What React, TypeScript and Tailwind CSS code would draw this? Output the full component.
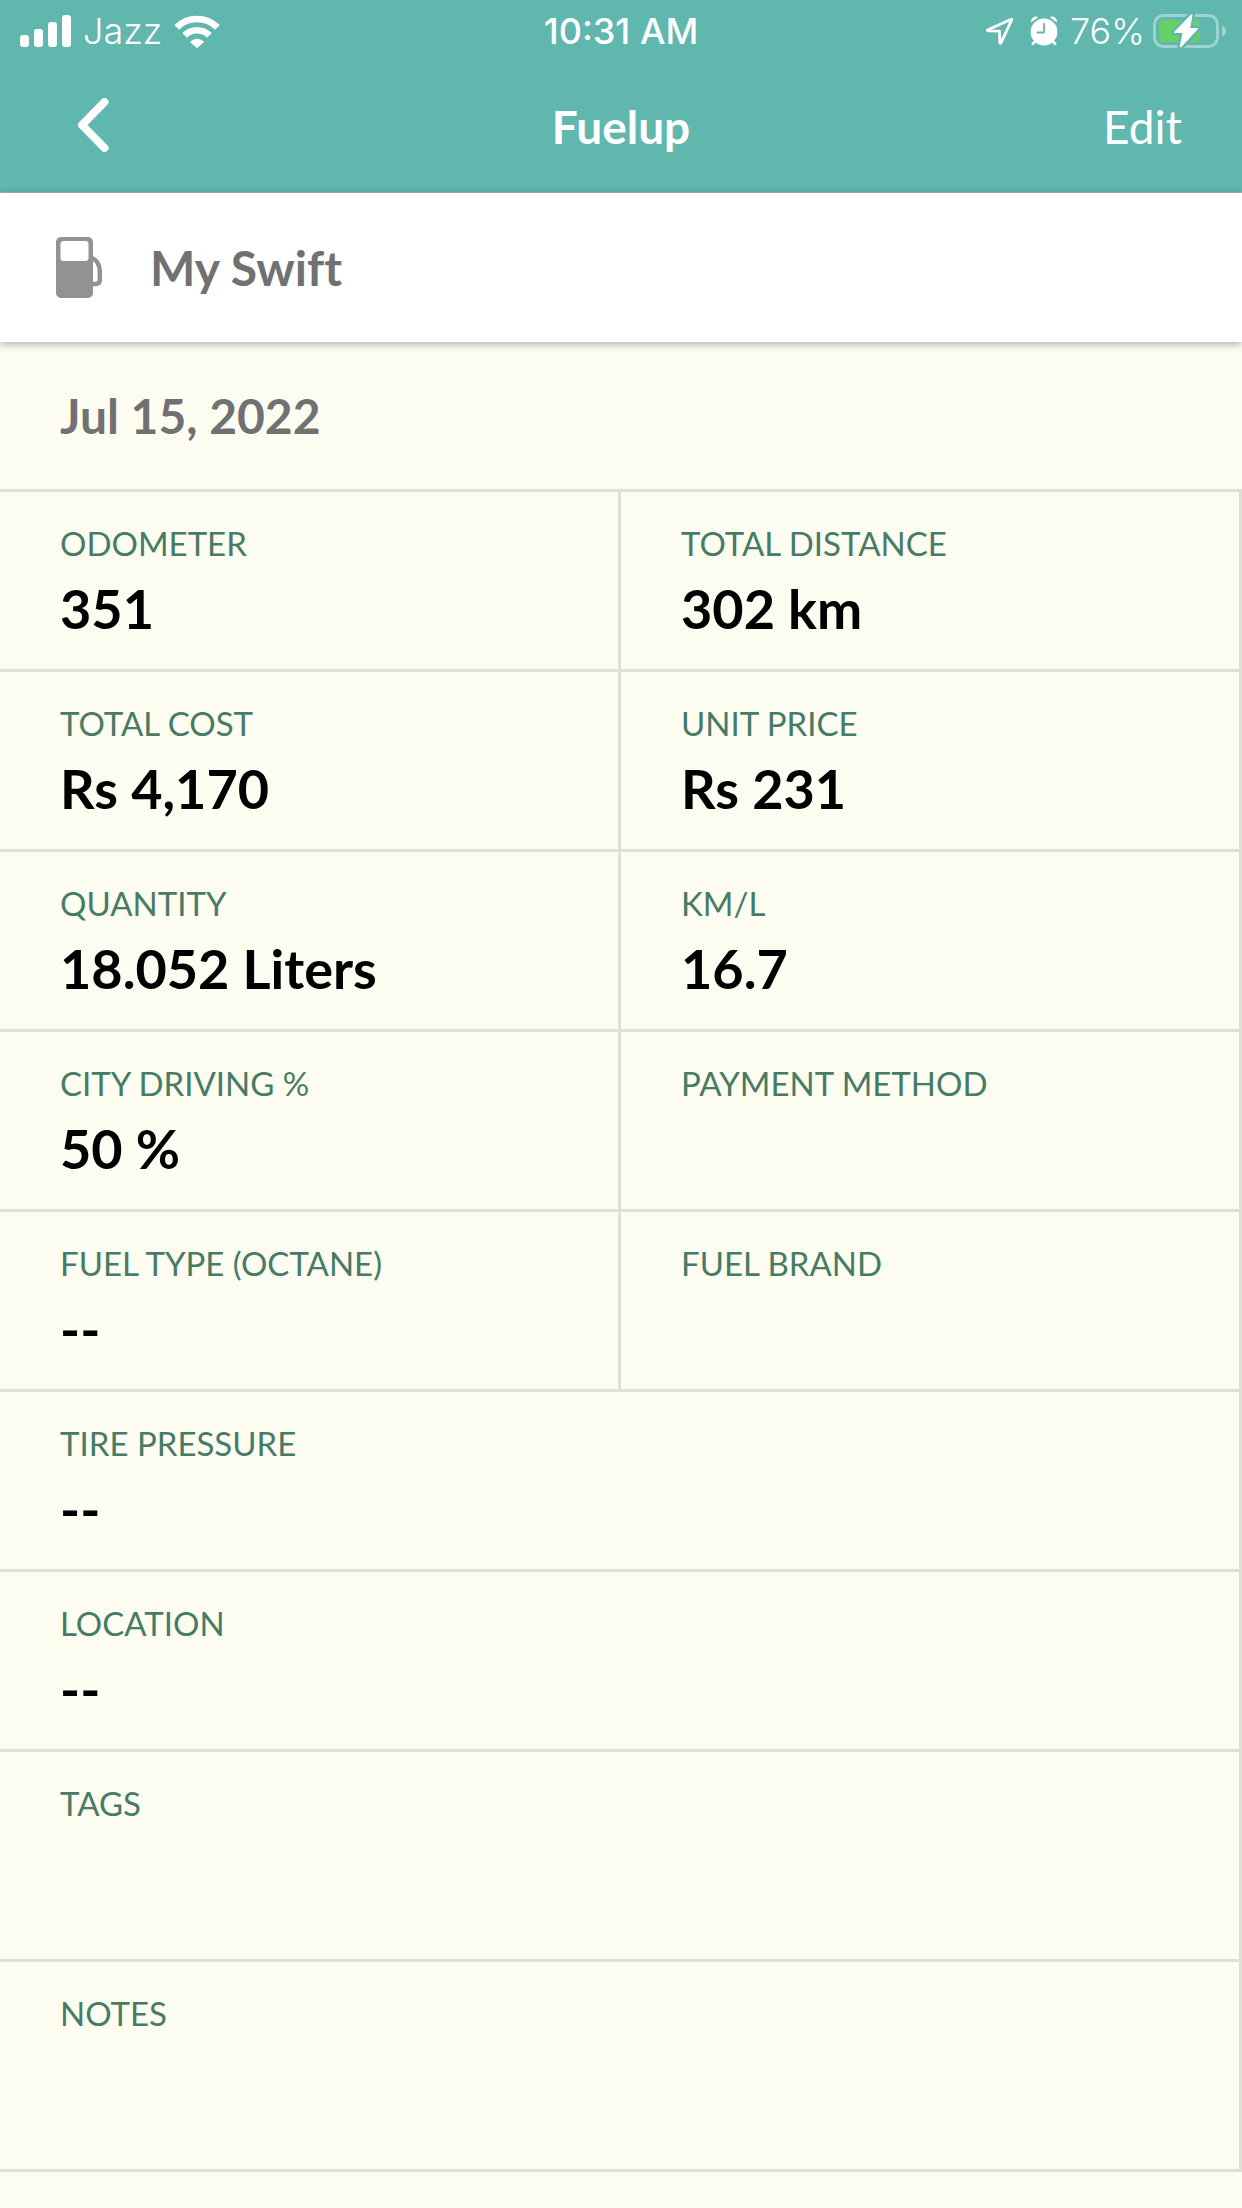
import React from "react";

type Field = { label: string; value?: string; wide?: boolean; tall?: boolean };

const fields: Field[] = [
  { label: "ODOMETER", value: "351" },
  { label: "TOTAL DISTANCE", value: "302 km" },
  { label: "TOTAL COST", value: "Rs 4,170" },
  { label: "UNIT PRICE", value: "Rs 231" },
  { label: "QUANTITY", value: "18.052 Liters" },
  { label: "KM/L", value: "16.7" },
  { label: "CITY DRIVING %", value: "50 %" },
  { label: "PAYMENT METHOD" },
  { label: "FUEL TYPE (OCTANE)", value: "--" },
  { label: "FUEL BRAND" },
  { label: "TIRE PRESSURE", value: "--", wide: true },
  { label: "LOCATION", value: "--", wide: true },
  { label: "TAGS", wide: true, tall: true },
  { label: "NOTES", wide: true, tall: true },
];

function SignalIcon() {
  return (
    <svg width="51" height="32" viewBox="0 0 51 32" fill="currentColor" aria-hidden="true">
      <rect x="0" y="20" width="9" height="12" rx="3" />
      <rect x="14" y="14" width="9" height="18" rx="3" />
      <rect x="28" y="7" width="9" height="25" rx="3" />
      <rect x="42" y="0" width="9" height="32" rx="3" />
    </svg>
  );
}

function WifiIcon() {
  return (
    <svg width="46" height="33" viewBox="0 0 46 33" aria-hidden="true">
      <g fill="none" stroke="currentColor" strokeWidth="6.6">
        <path d="M2.6 12.4a29 29 0 0 1 40.8 0" />
        <path d="M10.6 20.4a17.6 17.6 0 0 1 24.8 0" />
      </g>
      <path
        d="M16.6 26.2a9.4 9.4 0 0 1 12.8 0q.6.6 0 1.2l-5.6 5.2q-.8.7-1.6 0l-5.6-5.2q-.6-.6 0-1.2z"
        fill="currentColor"
      />
    </svg>
  );
}

function LocationIcon() {
  return (
    <svg width="28" height="28" viewBox="0 0 28 28" fill="none" aria-hidden="true">
      <path
        d="M25.3 2.2 2 12.7q-1.2.8.2 1.2l11.3.3.3 11.3q.4 1.4 1.3.2L25.8 2.7q.2-.8-.5-.5z"
        stroke="currentColor"
        strokeWidth="2.8"
        strokeLinejoin="round"
      />
    </svg>
  );
}

function AlarmIcon() {
  return (
    <svg width="28" height="30" viewBox="0 0 28 30" aria-hidden="true">
      <circle cx="14" cy="16" r="13.4" fill="currentColor" />
      <path
        d="M5 25.5 2.8 27.8M23 25.5l2.2 2.3"
        stroke="currentColor"
        strokeWidth="2.6"
        strokeLinecap="round"
      />
      <path
        d="M1.6 5.6C1 2.6 4.2 0 7.4 1.4zM26.4 5.6C27 2.6 23.8 0 20.6 1.4z"
        fill="currentColor"
        stroke="currentColor"
        strokeLinejoin="round"
      />
      <path
        d="M14 8v8.5H7.5"
        fill="none"
        stroke="#5fb7ae"
        strokeWidth="1.8"
        strokeLinecap="round"
        strokeLinejoin="round"
      />
    </svg>
  );
}

const bolt =
  "M38 .5 21.5 17.5q-.8 1.5.6 1.5h7.4L26.8 32q0 2 1.6 1L44.6 15.5q.8-1.5-.6-1.5h-6.8L39.4 1.5q.1-1.6-1.4-1z";

function BatteryIcon() {
  return (
    <svg width="73" height="34" viewBox="0 0 73 34" role="img" aria-label="Battery charging">
      <rect x="1.5" y="1.5" width="63" height="31" rx="9" fill="none" stroke="#9fd4ce" strokeWidth="3" />
      <path d="M69 11q4 2.5 4 6t-4 6z" fill="#9fd4ce" />
      <rect x="6" y="6" width="41" height="22" rx="4.5" fill="#66d067" />
      <path d={bolt} fill="#fff" stroke="#5fb7ae" strokeWidth="5" strokeLinejoin="round" />
      <path d={bolt} fill="#fff" />
    </svg>
  );
}

function BackIcon() {
  return (
    <svg width="34" height="58" viewBox="0 0 34 58" fill="none" aria-hidden="true">
      <path
        d="M28.5 4 6 27 28.5 50"
        stroke="currentColor"
        strokeWidth="8"
        strokeLinecap="round"
        strokeLinejoin="round"
      />
    </svg>
  );
}

function PumpIcon() {
  return (
    <svg width="46" height="61" viewBox="0 0 46 61" aria-hidden="true">
      <path
        fillRule="evenodd"
        fill="#929292"
        d="M5 0h27a5 5 0 0 1 5 5v51a5 5 0 0 1-5 5H5a5 5 0 0 1-5-5V5a5 5 0 0 1 5-5zM7.5 4Q4.5 4 4.5 7v14q0 3 3 3h22q3 0 3-3V7q0-3-3-3z"
      />
      <path d="M36 21c5 2 7.8 7 7.8 14v8q0 4-4 4H36" fill="none" stroke="#929292" strokeWidth="4.5" />
    </svg>
  );
}

function FieldCell({ label, value, wide, tall }: Field) {
  return (
    <div
      className={`border-t-3 border-r-3 border-[#dfdfd8] pl-15 pt-[30px] ${wide ? "col-span-2" : ""} ${
        tall ? "min-h-[210px]" : "min-h-[180px]"
      }`}
    >
      <dt className="text-[33px] leading-[42px] text-[#487b65]">{label}</dt>
      <dd className="mt-3 text-[54px] leading-[66px] font-bold text-black">{value}</dd>
    </div>
  );
}

export default function App() {
  return (
    <div className="min-h-screen bg-[#fcfdf0] font-['Lato',sans-serif]">
      <header className="border-b border-[#b0b0b0] bg-[#5fb7ae] text-white">
        <div className="grid h-[62px] grid-cols-[1fr_auto_1fr] items-center px-5 font-['Inter',sans-serif] text-[36px] leading-[42px]">
          <div className="flex items-center gap-3">
            <SignalIcon />
            <span className="font-light">Jazz</span>
            <WifiIcon />
          </div>
          <span className="font-medium">10:31 AM</span>
          <div className="-mr-1 flex items-center justify-end">
            <LocationIcon />
            <span className="ml-4">
              <AlarmIcon />
            </span>
            <span className="ml-3 font-light">76%</span>
            <span className="ml-2">
              <BatteryIcon />
            </span>
          </div>
        </div>
        <nav className="grid h-[130px] grid-cols-[1fr_auto_1fr] items-center px-15">
          <button type="button" aria-label="Back" className="justify-self-start pl-4">
            <BackIcon />
          </button>
          <h1 className="text-[46px] leading-[54px] font-bold">Fuelup</h1>
          <button type="button" className="justify-self-end text-[46px] leading-[54px]">
            Edit
          </button>
        </nav>
      </header>

      <main>
        <section className="relative flex h-[149px] items-center gap-12 bg-white pl-14 shadow-[0_2px_8px_rgba(0,0,0,0.32)]">
          <PumpIcon />
          <h2 className="text-[48px] leading-[60px] font-bold text-[#717171] [font-variant-ligatures:none]">
            My Swift
          </h2>
        </section>
        <p className="flex h-[147px] items-center pl-15 text-[48px] leading-[60px] font-bold text-[#717171]">
          Jul 15, 2022
        </p>
        <dl className="grid grid-cols-2 border-b-3 border-[#dfdfd8]">
          {fields.map((field) => (
            <FieldCell key={field.label} {...field} />
          ))}
        </dl>
      </main>
    </div>
  );
}
